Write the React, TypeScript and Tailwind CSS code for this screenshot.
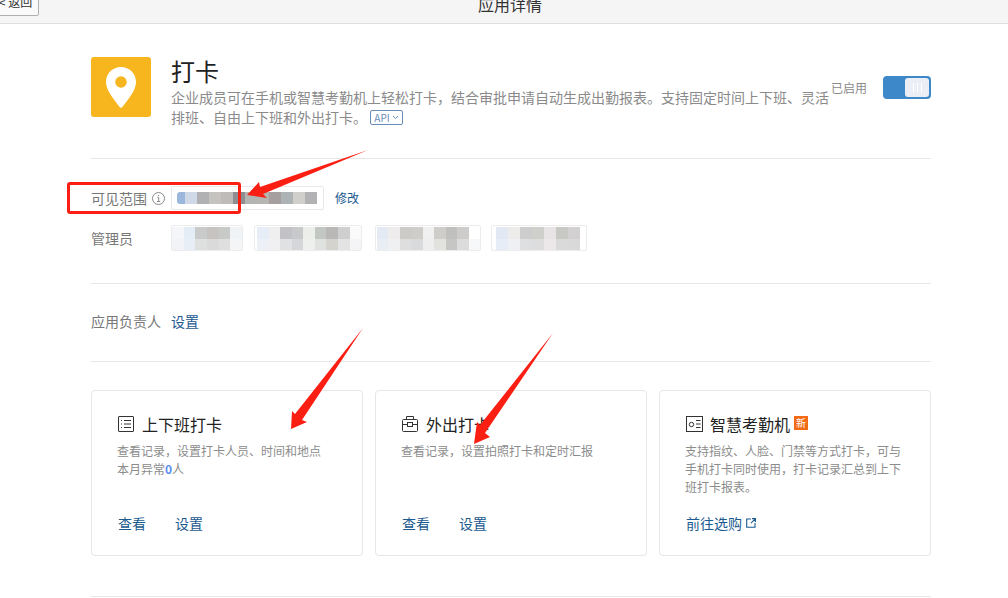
import React from "react";

const font = { fontFamily: '"Noto Sans CJK SC", "Liberation Sans", sans-serif' };

const one = ["#9bb8dc", "#d0d9e8", "#b1b1b3", "#c5c3bf", "#bfbbb9", "#8f8d91", "#b3b5b3", "#b5b5b1", "#a59f9f", "#adb2b5", "#d0cfcb", "#b2b2b4"];

const admins = [
  { box: "w-[72px] pl-0", top: ["#f5f6f9", "#e4ecf6", "#c9cbca", "#c6c3c1", "#c8cac7", "#f0f3f5"], bot: ["#f1f3f7", "#e7eef6", "#dedfdf", "#dadada", "#dedfde", "#f3f5f6"] },
  { box: "ml-[11px] w-[108px] pl-[2px]", top: ["#e6edf6", "#efefef", "#c2c2c6", "#c8c9cb", "#eceeea", "#c3c7c4", "#b9b8b7", "#cfcfcf", "#fafafa"], bot: ["#edf1f7", "#f0f0f2", "#dfe1e2", "#d5d6da", "#eef0ed", "#e0e2e0", "#d4d3cd", "#e2e3e2", "#f4f4f6"] },
  { box: "ml-[13px] w-[106px] pl-[1px]", top: ["#e3eaf4", "#eeecec", "#cdcbc8", "#cecdca", "#f0f0f0", "#cfcdc9", "#c0c0bf", "#cecccb", "#ffffff"], bot: ["#e9eef5", "#eff0f1", "#dedede", "#d9dadb", "#eeeeee", "#e2e2df", "#c6c6c4", "#dddcdc", "#f6f8fa"] },
  { box: "ml-[10px] w-[96px] pl-[4px]", top: ["#e2e9f5", "#edecea", "#cdcdcd", "#cfd0cb", "#e8e3e4", "#c8c8c4", "#d2d0d0"], bot: ["#e6edf6", "#eef0f3", "#dedfe0", "#dcdddc", "#ece8ea", "#dadada", "#d9d9d9"] },
];

function ListIcon() {
  return (
    <svg width="16" height="16" viewBox="0 0 16 16" fill="none" stroke="#333" strokeWidth="1">
      <rect x="0.5" y="0.5" width="15" height="15" rx="0.5" />
      <path d="M3 4.500h1M3 8h1M3 11.500h1M6 4.500h7M6 8h7M6 11.500h7" />
    </svg>
  );
}

function CaseIcon() {
  return (
    <svg width="16" height="16" viewBox="0 0 16 16" fill="none" stroke="#333" strokeWidth="1">
      <rect x="0.5" y="3.500" width="15" height="12" rx="1" />
      <path d="M4.500 3.500V.5h7v3M0.500 8.500h5M10.500 8.500h5" />
      <rect x="5.500" y="6.500" width="5" height="4" />
    </svg>
  );
}

function DeviceIcon() {
  return (
    <svg width="17" height="16" viewBox="0 0 17 16" fill="none" stroke="#333" strokeWidth="1">
      <rect x="0.5" y="0.5" width="16" height="15" />
      <circle cx="5.500" cy="8.500" r="2.200" />
      <path d="M10 4.500h4.500M10 8h4.500M10 11.500h4.500" />
    </svg>
  );
}

function Card({ icon, title, badge, children, links }: { icon: React.ReactNode; title: string; badge?: boolean; children: React.ReactNode; links: React.ReactNode }) {
  return (
    <div className="w-[272px] h-[166px] border border-[#e6e6e6] rounded-[4px] pl-[25px] pr-[20px] pt-[21px] flex flex-col">
      <div className="flex items-center h-[24px]">
        <span className="w-[17px] h-4 flex ml-[1px] mr-[7px]">{icon}</span>
        <span className="text-[16px] text-[#222] leading-[24px]">{title}</span>
        {badge && (
          <span className="ml-[4px] mb-[3px] w-[14px] h-[14px] bg-[#f26a13] text-white text-[10px] leading-[14px] text-center">新</span>
        )}
      </div>
      <div className="mt-[6px] h-[54px] text-[12px] leading-[18px] text-[#8c8c8c]">{children}</div>
      <div className="mt-[17px] pl-[1px] flex items-center text-[14px] leading-[20px] text-[#1a5a8f]">{links}</div>
    </div>
  );
}

export default function App() {
  return (
    <div className="w-[1008px] h-[598px] overflow-hidden bg-white relative" style={font}>
      <header className="h-[24px] bg-[#f5f5f5] border-b border-[#e0e0e0] relative flex justify-center">
        <div className="absolute left-[-8px] top-[-11px] w-[47px] h-[27px] bg-[#fafafa] border border-[#b0b0b0] rounded-[2px] text-[12px] leading-[24px] text-[#333] text-center">
          &lt; 返回
        </div>
        <div className="text-[16px] leading-[16px] text-[#333] mt-[-4px] ml-[12px]">应用详情</div>
      </header>

      <main className="w-[840px] ml-[91px] pt-px">
        <section className="h-[134px] pt-[32px] border-b border-[#e6e6e6] flex">
          <div className="w-[60px] h-[60px] bg-[#f7b51e] rounded-[3px] flex items-center justify-center shrink-0">
            <svg width="30" height="41" viewBox="0 0 30 41">
              <path fillRule="evenodd" fill="#fff" d="M15 0C6.700 0 0 6.600 0 15c0 4 1.700 8 4.200 12 2.900 4.600 6.400 9.300 9.400 13 .7.900 2.100.900 2.800 0 3-3.700 6.500-8.400 9.400-13C28.300 23 30 19 30 15 30 6.600 23.300 0 15 0Zm0 9.200a5.800 5.800 0 1 1 0 11.600 5.800 5.800 0 0 1 0-11.600Z" />
            </svg>
          </div>
          <div className="ml-[20px] w-[660px] shrink-0">
            <div className="text-[24px] leading-[30px] text-[#222] mt-[-1px]">打卡</div>
            <p className="text-[14px] leading-[20px] text-[#8a8a8a] mt-[1px]">
              企业成员可在手机或智慧考勤机上轻松打卡，结合审批申请自动生成出勤报表。支持固定时间上下班、灵活排班、自由上下班和外出打卡。
              <span className="inline-flex items-center justify-center align-middle ml-[3px] mb-[3px] w-[33px] h-[15px] border border-[#6b8db8] rounded-[2px] text-[10px] leading-[13px] text-[#6b8db8]">
                API
                <svg className="ml-[2px]" width="7" height="5" viewBox="0 0 7 5" fill="none" stroke="#6b8db8"><path d="M1 1l2.500 2.500L6 1" /></svg>
              </span>
            </p>
          </div>
          <span className="text-[12px] leading-[18px] text-[#8a8a8a] mt-[22px]">已启用</span>
          <div className="ml-[16px] mt-[19px] w-[48px] h-[23px] rounded-[4px] bg-[#3d88c9] p-[2px] flex justify-end">
            <div className="w-[24px] h-[19px] rounded-[3px] bg-[#eceef5] flex items-center justify-center gap-[3px]">
              <i className="w-px h-[9px] bg-white" />
              <i className="w-px h-[9px] bg-white" />
              <i className="w-px h-[9px] bg-white" />
            </div>
          </div>
        </section>

        <section className="h-[125px] pt-[27px] border-b border-[#e6e6e6]">
          <div className="flex items-center h-[24px]">
            <span className="w-[80px] flex items-center text-[14px] text-[#777]">
              可见范围
              <svg className="ml-[5px]" width="13" height="13" viewBox="0 0 13 13" fill="none" stroke="#888">
                <circle cx="6.500" cy="6.500" r="6" />
                <path d="M5.500 5.500h1.200v3.500M5 9.500h3.200M6.500 3v1.200" />
              </svg>
            </span>
            <div className="w-[153px] h-[24px] border border-[#e8e8e8] rounded-[2px] pl-[5px] flex items-center">
              {one.map((c, i) => (
                <i key={i} className={i === 0 ? "w-[8px] h-[12px] rounded-l-[3px]" : "w-[12px] h-[12px]"} style={{ backgroundColor: c }} />
              ))}
            </div>
            <span className="ml-[11px] text-[12px] text-[#1a5a8f]">修改</span>
          </div>
          <div className="flex items-center h-[26px] mt-[15px]">
            <span className="w-[80px] text-[14px] text-[#777]">管理员</span>
            <div className="flex">
              {admins.map((a, i) => (
                <div key={i} className={`${a.box} h-[26px] border border-[#ececec] rounded-[2px] pt-[1px] overflow-hidden`}>
                  {[a.top, a.bot].map((row, j) => (
                    <div key={j} className="flex">
                      {row.map((c, k) => (
                        <i key={k} className="w-[12px] h-[12px]" style={{ backgroundColor: c }} />
                      ))}
                    </div>
                  ))}
                </div>
              ))}
            </div>
          </div>
        </section>

        <section className="h-[78px] pb-[2px] border-b border-[#e6e6e6] flex items-center">
          <span className="w-[80px] text-[14px] text-[#777]">应用负责人</span>
          <span className="text-[14px] text-[#1a5a8f]">设置</span>
        </section>

        <section className="pt-[28px] h-[235px] border-b border-[#e6e6e6] flex gap-[12px] items-start">
          <Card
            icon={<ListIcon />}
            title="上下班打卡"
            links={<><span>查看</span><span className="ml-[29px]">设置</span></>}
          >
            <p>查看记录，设置打卡人员、时间和地点</p>
            <p>本月异常<b className="text-[#5b8def] font-bold">0</b>人</p>
          </Card>
          <Card
            icon={<CaseIcon />}
            title="外出打卡"
            links={<><span>查看</span><span className="ml-[29px]">设置</span></>}
          >
            <p>查看记录，设置拍照打卡和定时汇报</p>
          </Card>
          <Card
            icon={<DeviceIcon />}
            title="智慧考勤机"
            badge
            links={
              <>
                <span>前往选购</span>
                <svg className="ml-[4px]" width="10" height="10" viewBox="0 0 10 10" fill="none" stroke="#1a5a8f" strokeWidth="1.100">
                  <path d="M5 1H.7v8.300H9V5M5 5.200 9.300.8M6 .6h3.400V4" />
                </svg>
              </>
            }
          >
            <p>支持指纹、人脸、门禁等方式打卡，可与手机打卡同时使用，打卡记录汇总到上下班打卡报表。</p>
          </Card>
        </section>
      </main>

      <div className="absolute left-[67px] top-[182px] w-[174px] h-[32px] border-[3px] border-[#fb1f13] rounded-[3px]" />
      <svg className="absolute left-0 top-0 pointer-events-none" width="1008" height="598" fill="#fb1f13">
        <polygon points="368,150 263,194 267,198 247,195 259,182 260,187" />
        <polygon points="363,328 302,420 307,422 291,429 292,411 295,414" />
        <polygon points="553,333 485,433 490,437 474,444 477,422 480,425" />
      </svg>
    </div>
  );
}
